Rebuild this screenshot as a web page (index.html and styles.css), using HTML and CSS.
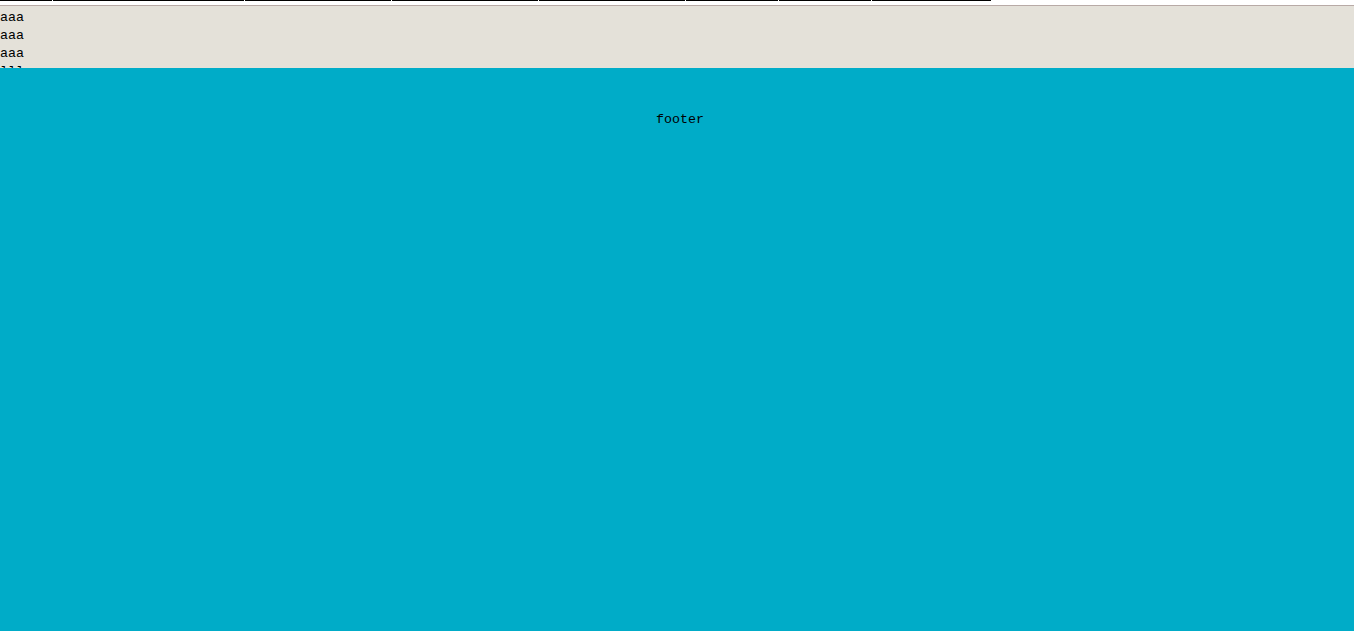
FILE: index.html
```html
<!DOCTYPE html>
<html>
<head>
<meta charset="utf-8">
<link rel="stylesheet" href="styles.css">
</head>
<body>
<ul class="nav">
  <li class="w1"></li>
  <li class="w2"></li>
  <li class="w3"></li>
  <li class="w3"></li>
  <li class="w3"></li>
  <li class="w4"></li>
  <li class="w4"></li>
  <li class="w5"></li>
</ul>
<div class="content">
  <div class="line">aaa</div>
  <div class="line">aaa</div>
  <div class="line">aaa</div>
  <div class="line">lll</div>
</div>
<div class="footer">footer</div>
</body>
</html>
```
FILE: styles.css
```css
html, body {
  margin: 0;
  padding: 0;
  height: 100%;
  background: #ffffff;
  font-family: "Liberation Mono", "DejaVu Sans Mono", monospace;
  font-size: 13.33px;
  color: #000;
}
body {
  display: flex;
  flex-direction: column;
  overflow: hidden;
}
.nav {
  list-style: none;
  margin: 0;
  padding: 0;
  display: flex;
  gap: 1px;
  height: 5px;
  flex: none;
}
.nav li {
  border-top: 1px solid #000;
}
.w1 { width: 52px; }
.w2 { width: 191px; }
.w3 { width: 146px; }
.w4 { width: 92px; }
.w5 { width: 119px; }
.content {
  flex: none;
  height: 59px;
  padding-top: 3px;
  border-top: 1px solid #b8aaa6;
  background: #e4e1d9;
  overflow: hidden;
}
.line {
  line-height: 18px;
  height: 18px;
}
.footer {
  flex: 1;
  background: #00acc8;
  text-align: center;
  padding-top: 43px;
  padding-left: 6px;
  line-height: 18px;
}
```
